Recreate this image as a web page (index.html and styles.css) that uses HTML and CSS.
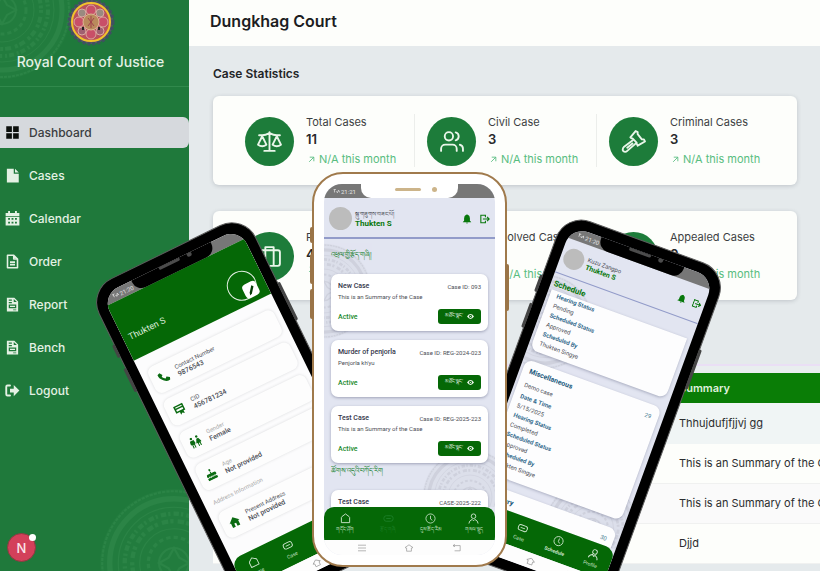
FILE: index.html
```html
<!DOCTYPE html>
<html lang="en">
<head>
<meta charset="utf-8">
<title>Dungkhag Court</title>
<link rel="stylesheet" href="styles.css">
</head>
<body>
<svg class="sprite" aria-hidden="true">
  <symbol id="i-grid" viewBox="0 0 24 24"><path fill="currentColor" d="M2 2h9v9H2zM13 2h9v9h-9zM2 13h9v9H2zM13 13h9v9h-9z"/></symbol>
  <symbol id="i-file" viewBox="0 0 24 24"><path fill="currentColor" d="M3 1h11v8h8v14H3zM16 1l6 6h-6z"/></symbol>
  <symbol id="i-calendar" viewBox="0 0 24 24"><path fill="currentColor" fill-rule="evenodd" d="M5 0h3v3h8V0h3v3h4v5H1V3h4zM1 9h22v14H1zM5 11v3h3v-3zm5.500 0v3h3v-3zm5.500 0v3h3v-3zM5 17v3h3v-3zm5.500 0v3h3v-3zm5.500 0v3h3v-3z"/></symbol>
  <symbol id="i-doc" viewBox="0 0 24 24"><path fill="none" stroke="currentColor" stroke-width="2.500" stroke-linejoin="round" d="M4 2h10l6 6v14H4zM14 2v6h6M8 13h8M8 17h8"/></symbol>
  <symbol id="i-report" viewBox="0 0 24 24"><path fill="currentColor" fill-rule="evenodd" d="M3 1h12l6 6v16H3zM6 4v2h5V4zm0 4v2h5V8zm8-5v5h5zM6 12v6h12v-6zm2 2h8v2H8zm5 6v1h5v-1z"/></symbol>
  <symbol id="i-logout" viewBox="0 0 24 24"><path fill="none" stroke="currentColor" stroke-width="3" stroke-linecap="round" d="M8 4H4Q2 4 2 6v12q0 2 2 2h4"/><path fill="currentColor" d="M8 9h6V3l9 9-9 9v-6H8z"/></symbol>
  <symbol id="i-scales" viewBox="0 0 24 24"><path fill="none" stroke="currentColor" stroke-width="1.800" stroke-linecap="round" stroke-linejoin="round" d="M12 3v18M7 21h10M2 6h3c3 0 5-1 7-2 2 1 4 2 7 2h3M5 7l-4 8q4 3 8 0zM19 7l-4 8q4 3 8 0z"/></symbol>
  <symbol id="i-users" viewBox="0 0 24 24"><path fill="none" stroke="currentColor" stroke-width="1.800" stroke-linecap="round" stroke-linejoin="round" d="M17 21v-2a4 4 0 0 0-4-4H6a4 4 0 0 0-4 4v2M23 21v-2a4 4 0 0 0-3-3.900M16 3.200a4 4 0 0 1 0 7.700"/><circle cx="9.500" cy="7" r="4" fill="none" stroke="currentColor" stroke-width="1.800"/></symbol>
  <symbol id="i-gavel" viewBox="0 0 24 24"><path fill="none" stroke="currentColor" stroke-width="1.800" stroke-linejoin="round" stroke-linecap="round" d="M9 8l5-6 2 1 0 2 4 5 2 0 1 2-7 4-1-2 0-1-4-4-1 0zM11 11l-8 6q-2 2-1 4 2 2 4 0l8-7M6 18l5-4"/></symbol>
  <symbol id="i-case" viewBox="0 0 24 24"><rect x="2" y="6" width="20" height="15" rx="2" fill="none" stroke="currentColor" stroke-width="1.800"/><path fill="none" stroke="currentColor" stroke-width="1.800" stroke-linejoin="round" d="M8 21V3h8v18"/></symbol>
  <symbol id="i-up" viewBox="0 0 12 12"><path fill="none" stroke="currentColor" stroke-width="1.500" d="M2 10l8-8M3 2h7v7"/></symbol>
  <symbol id="i-bell" viewBox="0 0 24 24"><path fill="currentColor" d="M10 2q2-2 4 0 5 2 5 8v6l3 3v1H2v-1l3-3v-6q0-6 5-8zM9 21h6q-3 4-6 0z"/></symbol>
  <symbol id="i-exit" viewBox="0 0 24 24"><path fill="none" stroke="currentColor" stroke-width="2.600" d="M13 8V3H2v18h11v-5M7 12h15M17 7l5 5-5 5"/></symbol>
  <symbol id="i-eye" viewBox="0 0 24 24"><path fill="currentColor" fill-rule="evenodd" d="M0 12q12-17 24 0-12 17-24 0zM12 7a5 5 0 1 0 0 10 5 5 0 0 0 0-10zM12 10a2 2 0 1 1 0 4 2 2 0 0 1 0-4z"/></symbol>
  <symbol id="i-home" viewBox="0 0 24 24"><path fill="none" stroke="currentColor" stroke-width="2" stroke-linejoin="round" d="M3 10q0-1 1-2l8-6 8 6q1 1 1 2v11H3z"/></symbol>
  <symbol id="i-homefill" viewBox="0 0 24 24"><path fill="currentColor" d="M12 2l11 10h-3v10h-6v-7h-4v7H4V12H1z"/></symbol>
  <symbol id="i-link" viewBox="0 0 24 24"><rect x="2" y="6" width="20" height="12" rx="5" fill="none" stroke="currentColor" stroke-width="2"/><path stroke="currentColor" stroke-width="2" d="M7 12h10"/></symbol>
  <symbol id="i-clock" viewBox="0 0 24 24"><circle cx="12" cy="12" r="10" fill="none" stroke="currentColor" stroke-width="1.800"/><path fill="none" stroke="currentColor" stroke-width="1.800" d="M12 6v7l4 3"/></symbol>
  <symbol id="i-person" viewBox="0 0 24 24"><circle cx="12" cy="7" r="5" fill="none" stroke="currentColor" stroke-width="2"/><path fill="none" stroke="currentColor" stroke-width="2" d="M2 23q0-6 7-9l3 3 3-3q7 3 7 9"/></symbol>
  <symbol id="i-phone" viewBox="0 0 24 24"><path fill="currentColor" d="M2 3l5-2 4 6-3 3q2 4 6 6l3-3 6 4-2 5q-6 2-13-5T2 3z"/></symbol>
  <symbol id="i-card" viewBox="0 0 24 24"><path fill="currentColor" fill-rule="evenodd" d="M2 2h20v15h-4v6l-4-3-4 3v-6H2zM5 5v2h14V5zm0 5v4h14v-4z"/></symbol>
  <symbol id="i-gender" viewBox="0 0 24 24"><circle cx="6" cy="3" r="2.500" fill="currentColor"/><circle cx="18" cy="3" r="2.500" fill="currentColor"/><path fill="currentColor" d="M2 7h8l1 8H9v8H7v-7H5v7H3v-8H0zM16 7h4l4 9h-3v7h-2v-6h-2v6h-2v-7h-3z"/></symbol>
  <symbol id="i-cake" viewBox="0 0 24 24"><path fill="currentColor" d="M12 0q4 4 0 6-4-2 0-6zM11 7h2v3h6q3 0 3 3v2q-3 3-5 0-3 3-5 0-3 3-5 0-3 3-5 0v-2q0-3 3-3h6zM2 18q3 1 5-1 3 3 5 0 3 3 5 0 2 2 5 1v5H2z"/></symbol>
  <symbol id="i-pencil" viewBox="0 0 24 24"><path fill="currentColor" d="M16 2l4 4L9 20l-6 3 2-7z"/></symbol>
  <symbol id="i-signal" viewBox="0 0 24 16"><path fill="none" stroke="currentColor" stroke-width="2.500" d="M2 3h8M5 3v10M11 9l4 5 4-9 4 8"/></symbol>
  <symbol id="i-penta" viewBox="0 0 24 20"><path fill="none" stroke="currentColor" stroke-width="1.800" stroke-linejoin="round" d="M12 2l10 7-4 1v8H6v-8L2 9z"/></symbol>
  <symbol id="i-menu" viewBox="0 0 24 20"><path stroke="currentColor" stroke-width="1.800" d="M2 3h20M2 10h20M2 17h20"/></symbol>
  <symbol id="i-back" viewBox="0 0 24 20"><path fill="none" stroke="currentColor" stroke-width="1.800" d="M7 1L2 4l5 3M2 4h18v13H6"/></symbol>
  <symbol id="i-mandala" viewBox="0 0 140 140">
    <circle cx="70" cy="70" r="69" fill="currentColor" opacity=".3"/>
    <g fill="none" stroke="currentColor">
      <circle cx="70" cy="70" r="67" stroke-width="2" stroke-dasharray="3 1"/>
      <circle cx="70" cy="70" r="60" stroke-width="5"/>
      <circle cx="70" cy="70" r="52" stroke-width="1"/>
      <circle cx="70" cy="70" r="46" stroke-width="4" stroke-dasharray="5 2 2 3"/>
      <circle cx="70" cy="70" r="39" stroke-width="4" stroke-dasharray="3 4 6 2"/>
      <circle cx="70" cy="70" r="32" stroke-width="1"/>
      <circle cx="70" cy="70" r="24" stroke-width="3" stroke-dasharray="4 3"/>
      <circle cx="70" cy="70" r="14" stroke-width="2"/>
      <path stroke-width="2" d="M70 56l5 9 9 5-9 5-5 9-5-9-9-5 9-5z"/>
    </g>
  </symbol>
</svg>

<div class="stage">
  <div class="dashboard">
    <aside class="sidebar">
      <svg class="mandala mandala-top" aria-hidden="true"><use href="#i-mandala"/></svg>
      <svg class="mandala mandala-bottom" aria-hidden="true"><use href="#i-mandala"/></svg>
      <div class="brand">
        <svg class="crest" viewBox="0 0 48 48" aria-hidden="true">
          <circle cx="24" cy="24" r="22" fill="#5b5368" stroke="#3f5160" stroke-width="3" stroke-dasharray="3 2"/>
          <circle cx="24" cy="24" r="19" fill="#b9505c" stroke="#f0c22c" stroke-width="2"/>
          <g fill="#c94f68" stroke="#d9a9a0" stroke-width="1">
            <circle cx="24" cy="12" r="5"/><circle cx="24" cy="36" r="5"/><circle cx="12" cy="24" r="5"/><circle cx="36" cy="24" r="5"/>
            <circle cx="15" cy="15" r="4" fill="#9a8a80"/><circle cx="33" cy="15" r="4" fill="#9a8a80"/><circle cx="15" cy="33" r="4" fill="#a06070"/><circle cx="33" cy="33" r="4" fill="#a06070"/>
          </g>
          <circle cx="24" cy="24" r="8" fill="#b98a5c" stroke="#dcb490"/>
          <path d="M21 20l6 8M27 20l-6 8M24 18v12" stroke="#a0434c" stroke-width="1"/>
          <path d="M16 29v3M32 29v3" stroke="#222" stroke-width="2"/>
        </svg>
        <div class="brand-name">Royal Court of Justice</div>
      </div>
      <nav class="nav">
        <a class="nav-item active" href="#"><svg><use href="#i-grid"/></svg>Dashboard</a>
        <a class="nav-item" href="#"><svg><use href="#i-file"/></svg>Cases</a>
        <a class="nav-item" href="#"><svg><use href="#i-calendar"/></svg>Calendar</a>
        <a class="nav-item" href="#"><svg><use href="#i-doc"/></svg>Order</a>
        <a class="nav-item" href="#"><svg><use href="#i-report"/></svg>Report</a>
        <a class="nav-item" href="#"><svg><use href="#i-report"/></svg>Bench</a>
        <a class="nav-item" href="#"><svg><use href="#i-logout"/></svg>Logout</a>
      </nav>
      <button class="dev-badge" type="button">N<span class="dev-dot"></span></button>
    </aside>
    <main class="main">
      <header class="topbar"><h1>Dungkhag Court</h1></header>
      <div class="content">
        <h2>Case Statistics</h2>
        <section class="stats">
          <div class="stat"><span class="disc"><svg><use href="#i-scales"/></svg></span><div><p class="label">Total Cases</p><p class="num">11</p><p class="trend"><svg><use href="#i-up"/></svg>N/A this month</p></div></div>
          <div class="stat"><span class="disc"><svg><use href="#i-users"/></svg></span><div><p class="label">Civil Case</p><p class="num">3</p><p class="trend"><svg><use href="#i-up"/></svg>N/A this month</p></div></div>
          <div class="stat"><span class="disc"><svg><use href="#i-gavel"/></svg></span><div><p class="label">Criminal Cases</p><p class="num">3</p><p class="trend"><svg><use href="#i-up"/></svg>N/A this month</p></div></div>
        </section>
        <section class="stats">
          <div class="stat"><span class="disc"><svg><use href="#i-case"/></svg></span><div><p class="label">R</p><p class="num">4</p><p class="trend"><svg><use href="#i-up"/></svg></p></div></div>
          <div class="stat"><span class="disc"></span><div><p class="label">Resolved Cases</p><p class="num">&nbsp;</p><p class="trend"><svg><use href="#i-up"/></svg>N/A this month</p></div></div>
          <div class="stat"><span class="disc"></span><div><p class="label">Appealed Cases</p><p class="num">0</p><p class="trend"><svg><use href="#i-up"/></svg>N/A this month</p></div></div>
        </section>
        <div class="table-card">
          <table>
            <thead><tr><th class="lead"></th><th>Summary</th></tr></thead>
            <tbody>
              <tr><td></td><td>Thhujdufjfjjvj gg</td></tr>
              <tr><td></td><td>This is an Summary of the Case</td></tr>
              <tr><td></td><td>This is an Summary of the Case</td></tr>
              <tr><td></td><td>Djjd</td></tr>
            </tbody>
          </table>
        </div>
      </div>
    </main>
  </div>

  <section class="phone dark phone-left">
    <i class="key k1"></i><i class="key k2"></i><i class="key k3"></i>
    <div class="screen">
      <div class="status"><svg><use href="#i-signal"/></svg>21:20</div>
      <div class="notch"><i></i><b></b></div>
      <div class="profile-head">
        <span>Thukten S</span>
        <div class="ring"><button class="edit" type="button" aria-label="Edit"><svg><use href="#i-pencil"/></svg></button></div>
      </div>
      <div class="profile-body">
        <div class="info"><svg><use href="#i-phone"/></svg><p><small>Contact Number</small>9876543</p></div>
        <div class="info"><svg><use href="#i-card"/></svg><p><small>CID</small>456781234</p></div>
        <div class="info"><svg><use href="#i-gender"/></svg><p><small class="pale">Gender</small>Female</p></div>
        <div class="info"><svg><use href="#i-cake"/></svg><p><small class="pale">Age</small>Not provided</p></div>
        <h3>Address Information</h3>
        <div class="info"><svg><use href="#i-homefill"/></svg><p><small>Present Address</small>Not provided</p></div>
      </div>
      <nav class="tabs">
        <a href="#"><svg><use href="#i-home"/></svg>Home</a><a href="#"><svg><use href="#i-link"/></svg>Case</a><a href="#"></a><a href="#"></a>
      </nav>
      <div class="sysbar"><svg><use href="#i-menu"/></svg><svg><use href="#i-penta"/></svg><svg><use href="#i-back"/></svg></div>
    </div>
  </section>

  <section class="phone dark phone-right">
    <i class="key k1"></i><i class="key k2"></i><i class="key k3"></i>
    <div class="screen">
      <div class="status"><svg><use href="#i-signal"/></svg>21:20</div>
      <div class="notch"><i></i><b></b></div>
      <div class="user-head">
        <span class="avatar"></span>
        <p>Kuzu Zangpo<strong>Thukten S</strong></p>
        <svg><use href="#i-bell"/></svg><svg><use href="#i-exit"/></svg>
      </div>
      <div class="schedule">
        <svg class="mark m1"><use href="#i-mandala"/></svg><svg class="mark m2"><use href="#i-mandala"/></svg>
        <h3>Schedule</h3>
        <article class="hearing first">
          <dl><dt>Hearing Status</dt><dd>Pending</dd><dt>Scheduled Status</dt><dd>Approved</dd><dt>Scheduled By</dt><dd>Thukten Singye</dd></dl>
        </article>
        <article class="hearing second">
          <header><h4>Miscellaneous</h4><span>29</span></header>
          <p>Demo case</p>
          <dl><dt>Date &amp; Time</dt><dd>5/15/2025</dd><dt>Hearing Status</dt><dd>Completed</dd><dt>Scheduled Status</dt><dd>Approved</dd><dt>Scheduled By</dt><dd>Thukten Singye</dd></dl>
        </article>
        <article class="hearing third"><header><h4>Summary</h4><span>30</span></header></article>
      </div>
      <nav class="tabs">
        <a href="#"></a><a href="#"><svg><use href="#i-link"/></svg>Case</a><a href="#"><svg><use href="#i-clock"/></svg><b>Schedule</b></a><a href="#"><svg><use href="#i-person"/></svg>Profile</a>
      </nav>
      <div class="sysbar"><svg><use href="#i-menu"/></svg><svg><use href="#i-penta"/></svg><svg><use href="#i-back"/></svg></div>
    </div>
  </section>

  <section class="phone light phone-center">
    <i class="key k1"></i><i class="key k2"></i><i class="key k3"></i><i class="key k4"></i>
    <div class="screen">
      <div class="status"><svg><use href="#i-signal"/></svg>21:21</div>
      <div class="notch"><i></i><b></b></div>
      <div class="user-head">
        <span class="avatar"></span>
        <p lang="dz">སྐུ་གཟུགས་བཟང་པོ།<strong>Thukten S</strong></p>
        <svg><use href="#i-bell"/></svg><svg><use href="#i-exit"/></svg>
      </div>
      <div class="feed">
        <svg class="mark m1"><use href="#i-mandala"/></svg><svg class="mark m2"><use href="#i-mandala"/></svg>
        <h3 lang="dz">འཕྲལ་གྱི་རྩོད་གཞི།</h3>
        <article class="case"><header><h4>New Case</h4><span>Case ID: 093</span></header><p>This is an Summary of the Case</p><footer><em>Active</em><button type="button" lang="dz">མཐོང་སྣང་<svg><use href="#i-eye"/></svg></button></footer></article>
        <article class="case"><header><h4>Murder of penjorla</h4><span>Case ID: REG-2024-023</span></header><p>Penjorla kh'yu</p><footer><em>Active</em><button type="button" lang="dz">མཐོང་སྣང་<svg><use href="#i-eye"/></svg></button></footer></article>
        <article class="case"><header><h4>Test Case</h4><span>Case ID: REG-2025-223</span></header><p>This is an Summary of the Case</p><footer><em>Active</em><button type="button" lang="dz">མཐོང་སྣང་<svg><use href="#i-eye"/></svg></button></footer></article>
        <h3 class="later" lang="dz">ཚོགས་འདུའི་བཀོད་རིག</h3>
        <article class="case"><header><h4>Test Case</h4><span>CASE-2025-222</span></header></article>
      </div>
      <nav class="tabs" lang="dz">
        <a href="#"><svg><use href="#i-home"/></svg>གདོང་ཤོག</a><a class="dim" href="#"><svg><use href="#i-link"/></svg>རྩོད་གཞི</a><a href="#"><svg><use href="#i-clock"/></svg>དུས་ཚོད་རིམ</a><a href="#"><svg><use href="#i-person"/></svg>གསལ་སྡུད</a>
      </nav>
      <div class="sysbar"><svg><use href="#i-menu"/></svg><svg><use href="#i-penta"/></svg><svg><use href="#i-back"/></svg></div>
    </div>
  </section>
</div>
</body>
</html>
```
FILE: styles.css
```css
* { box-sizing: border-box; margin: 0; padding: 0; }
body { font-family: Inter, "Liberation Sans", sans-serif; color: #2b2d2f; }
a { color: inherit; text-decoration: none; }
button { border: 0; font: inherit; color: inherit; }
svg { display: block; flex: none; }
.sprite { position: absolute; width: 0; height: 0; }

.stage { position: relative; height: 100vh; overflow: hidden; }
.dashboard { display: flex; min-height: 100%; }

/* Sidebar */
.sidebar { position: relative; flex: none; width: 189px; background: #1f793b; color: #e4f1e4; overflow: hidden; }
.mandala { position: absolute; color: #5cb274; opacity: .2; }
.mandala-top { width: 140px; height: 140px; left: -68px; top: -60px; }
.mandala-bottom { width: 150px; height: 150px; left: 99px; top: 488px; }
.brand { position: relative; height: 87px; border-bottom: 1px solid #31894c; padding-right: 8px; display: flex; flex-direction: column; align-items: center; }
.crest { width: 48px; height: 48px; margin-top: -2px; }
.brand-name { font-size: 14px; font-weight: 500; line-height: 16px; margin-top: 8px; white-space: nowrap; }
.nav { position: relative; display: flex; flex-direction: column; gap: 12px; padding-top: 30px; }
.nav-item { display: flex; align-items: center; gap: 9px; height: 31px; padding-left: 5px; font-size: 12px; font-weight: 500; }
.nav-item svg { width: 15px; height: 15px; }
.nav-item.active { background: #d6d9dd; color: #3a3d41; border-radius: 0 6px 6px 0; }
.nav-item.active svg { color: #0c0f0c; }
.dev-badge { position: absolute; left: 7px; bottom: 9px; width: 29px; height: 29px; border-radius: 50%; background: #d3405a; border: 1px solid #8c3a40; color: #fbe6ea; font-size: 13px; font-weight: 500; }
.dev-dot { position: absolute; right: -1px; top: 0; width: 7px; height: 7px; border-radius: 50%; background: #fff; }

/* Main area */
.main { flex: 1; min-width: 0; background: #e5eaec; overflow: hidden; }
.topbar { height: 46px; background: #fdfefb; padding: 12px 21px; }
h1 { font-size: 16px; line-height: 18px; font-weight: 600; color: #1c1d1f; }
.content { padding: 20px 23px 0 24px; }
h2 { font-size: 12px; line-height: 16px; font-weight: 600; color: #232527; margin-bottom: 14px; }
.stats { display: grid; grid-template-columns: repeat(3, 1fr); height: 89px; margin-bottom: 26px; padding: 18px 19px; background: #fdfefb; border-radius: 6px; box-shadow: 0 1px 4px rgba(60, 70, 80, .22); }
.stat { display: flex; gap: 12px; padding-left: 12px; border-left: 1px solid #eceeeb; }
.stat:first-child { border-color: transparent; }
.disc { flex: none; display: grid; place-items: center; width: 49px; height: 49px; margin-top: 3px; border-radius: 50%; background: #1d7c3a; color: #eaf6ea; }
.disc svg { width: 25px; height: 25px; }
.label { font-size: 11px; line-height: 16px; white-space: nowrap; color: #3c3f42; }
.num { font-size: 13px; line-height: 18px; font-weight: 600; color: #26282a; }
.trend { display: flex; align-items: center; gap: 4px; margin-top: 3px; padding-left: 2px; font-size: 11px; line-height: 16px; color: #58bd80; white-space: nowrap; }
.trend svg { width: 7px; height: 7px; }
.table-card { width: 720px; margin-top: 64px; border-top: 2px solid #eadff5; padding-top: 7px; background: #e9eeef; }
table { width: 100%; border-collapse: collapse; table-layout: fixed; }
.lead { width: 450px; }
th { height: 30px; padding: 0 16px; text-align: left; background: #0a7d06; color: #dff0dc; font-size: 11px; font-weight: 600; }
td { height: 40px; padding: 0 16px; font-size: 11px; background: #fdfefb; border-bottom: 1px solid #f0f1f0; white-space: nowrap; }
tbody tr:first-child td { background: #f0f5f5; border-color: #f0f5f5; }
tbody tr:nth-child(3) td { background: #fafafa; }

/* Phones */
.phone { position: absolute; font-family: Roboto, "Noto Sans", sans-serif; color: #4b4d56; font-size: 6px; }
.dark { padding: 10px; background: #000; border: 1px solid #5d5d5d; border-radius: 27px; transform-origin: 0 0; }
.light { padding: 10px; background: #fff; border: 2px solid #a07a4c; border-radius: 31px; }
.key { position: absolute; width: 3px; border-radius: 2px; background: #454545; }
.light .key { width: 4px; background: #9a7448; }
.screen { position: relative; height: 100%; display: flex; flex-direction: column; overflow: hidden; background: #e2e5f1; border-radius: 18px; }
.status { flex: none; display: flex; align-items: center; gap: 1px; height: 14px; padding-left: 9px; background: #777; color: #e6e6e6; font-size: 6px; }
.status svg { width: 7px; height: 6px; }
.notch { position: absolute; top: -1px; left: 50%; width: 97px; height: 15px; margin-left: -49px; border-radius: 0 0 10px 10px; background: #fff; }
.dark .notch { width: 88px; margin-left: -44px; background: #000; }
.notch i { position: absolute; left: 34px; top: 5px; width: 26px; height: 3px; border-radius: 2px; background: #ccb48a; }
.notch b { position: absolute; left: 71px; top: 4px; width: 5px; height: 5px; border-radius: 50%; background: #ccb48a; }
.dark .notch i { left: 30px; top: 1px; width: 23px; background: #4c4c4c; }
.dark .notch b { left: 61px; top: 0; background: #4c4c4c; }

.user-head { flex: none; display: flex; align-items: center; gap: 3px; height: 41px; padding: 2px 5px 0; border-bottom: 2px solid #929bc9; }
.user-head p { flex: 1; font-size: 6px; line-height: 10px; white-space: nowrap; }
.user-head strong { display: block; font-size: 8px; color: #08780c; }
.user-head svg { width: 10px; height: 10px; margin-left: 5px; color: #08780c; }
.avatar { flex: none; width: 23px; height: 23px; border-radius: 50%; background: #bcbcbc; }

.mark { position: absolute; width: 96px; height: 96px; color: #9a9ca6; opacity: .26; }
.tabs { flex: none; position: relative; display: grid; grid-template-columns: repeat(4, 1fr); background: #056806; color: #cfe6cf; border-radius: 10px 10px 0 0; }
.tabs a { display: flex; flex-direction: column; align-items: center; gap: 1px; padding-top: 6px; font-size: 5px; line-height: 8px; white-space: nowrap; }
.tabs svg { width: 11px; height: 11px; }
.tabs .dim { color: #1d7f28; }
.sysbar { flex: none; position: relative; display: flex; justify-content: space-around; align-items: center; height: 15px; padding: 0 14px; background: #fdfdfd; color: #999; }
.sysbar svg { width: 10px; height: 8px; }

/* Centre phone */
.phone-center { left: 312px; top: 172px; width: 195px; height: 395px; }
.phone-center .k1 { left: -4px; top: 53px; height: 16px; }
.phone-center .k2 { left: -4px; top: 80px; height: 30px; }
.phone-center .k3 { left: -4px; top: 115px; height: 30px; }
.phone-center .k4 { right: -4px; top: 90px; height: 47px; }
.feed { position: relative; flex: 1; min-height: 0; overflow: hidden; padding: 10px 7px 0; }
.feed .m1 { left: -48px; top: 4px; }
.feed .m2 { left: 98px; top: 210px; }
.feed h3 { position: relative; height: 12px; margin-bottom: 13px; font-size: 7px; line-height: 12px; font-weight: 500; color: #14802c; }
.feed h3.later { margin: -7px 0 13px; }
.case { position: relative; height: 57px; margin-bottom: 9px; padding: 7px; background: #fff; border-radius: 7px; box-shadow: 0 1px 3px rgba(60, 66, 100, .4); }
.case header, .case footer { display: flex; justify-content: space-between; align-items: center; }
.case h4 { font-size: 7px; line-height: 11px; font-weight: 500; color: #34364a; }
.case span { font-size: 6px; line-height: 11px; }
.case p { font-size: 6px; line-height: 10px; }
.case footer { margin-top: 7px; }
.case em { font-style: normal; font-weight: 500; font-size: 7px; color: #188a2c; }
.case button { display: flex; align-items: center; justify-content: center; gap: 4px; width: 43px; height: 15px; border-radius: 3px; background: #056806; color: #e9f4e9; font-size: 5px; }
.case button svg { width: 7px; height: 7px; }
.phone-center .tabs { height: 33px; }

/* Right phone */
.phone-right { left: 565px; top: 212px; width: 174px; height: 358px; transform: rotate(20deg); }
.phone-right .status, .phone-left .status { height: 12px; }
.phone-right .notch, .phone-left .notch { height: 13px; }
.phone-right .user-head { height: 37px; padding: 0 3px; border-bottom-width: 1px; }
.phone-right .user-head p { line-height: 9px; }
.phone-right .user-head strong { font-size: 7px; }
.phone-right .user-head svg { width: 9px; height: 9px; margin-left: 4px; }
.phone-right .avatar { width: 21px; height: 21px; }
.phone-right .k1 { left: -3px; top: 66px; height: 18px; }
.phone-right .k2 { left: -3px; top: 96px; height: 26px; }
.phone-right .k3 { right: -3px; top: 82px; height: 42px; }
.schedule { position: relative; flex: 1; min-height: 0; overflow: hidden; padding: 5px 5px 0 3px; }
.schedule .m1 { left: -40px; top: 2px; }
.schedule .m2 { left: 74px; top: 180px; }
.schedule h3 { position: relative; font-size: 8px; line-height: 12px; color: #08780c; }
.hearing { position: relative; padding: 5px 7px; margin-bottom: 10px; background: #fdfdfe; border-radius: 8px; box-shadow: 0 1px 3px rgba(60, 66, 100, .35); }
.hearing.first { height: 64px; padding-top: 0; border-radius: 0 0 8px 8px; }
.hearing.second { height: 120px; }
.hearing.third { height: 50px; }
.hearing header { display: flex; justify-content: space-between; line-height: 13px; color: #4b7f93; }
.hearing h4 { font-size: 7px; color: #20587c; }
.hearing p { line-height: 14px; }
.hearing dt { line-height: 10px; font-weight: 600; color: #276286; }
.hearing dd { line-height: 10px; }
.phone-right .tabs { height: 32px; }

/* Left phone */
.phone-left { left: 87px; top: 290px; width: 175px; height: 364px; transform: rotate(-26deg); }
.phone-left .screen { background: #fcfcfd; }
.phone-left .k1 { left: -3px; top: 60px; height: 14px; }
.phone-left .k2 { left: -3px; top: 86px; height: 26px; }
.phone-left .k3 { right: -3px; top: 76px; height: 42px; }
.profile-head { flex: none; display: flex; justify-content: space-between; align-items: flex-end; height: 61px; padding: 0 8px 5px 6px; background: #056806; color: #d5ead5; font-size: 9px; }
.profile-head span { line-height: 36px; }
.ring { position: relative; width: 30px; height: 30px; border: 1px solid #e4f0e4; border-radius: 50%; }
.edit { position: absolute; right: 0; bottom: -1px; display: grid; place-items: center; width: 15px; height: 15px; border-radius: 4px; background: #fff; color: #063d08; }
.edit svg { width: 10px; height: 10px; }
.profile-body { flex: 1; min-height: 0; padding: 13px 6px 0 7px; overflow: hidden; }
.info { display: flex; align-items: center; gap: 8px; height: 29px; margin-bottom: 7px; padding-left: 7px; border-radius: 7px; background: #fdfdfd; box-shadow: 0 0 3px rgba(80, 84, 90, .2); }
.info svg { width: 12px; height: 12px; color: #0b6b12; }
.info p { font-size: 7px; line-height: 9px; font-weight: 500; }
.info small { display: block; font-size: 6px; font-weight: 400; }
.info .pale { color: #aaa; }
.profile-body h3 { font-size: 6px; line-height: 10px; margin: 8px 0 6px 2px; font-weight: 400; color: #a9a9a9; }
.phone-left .tabs { height: 32px; }
```
